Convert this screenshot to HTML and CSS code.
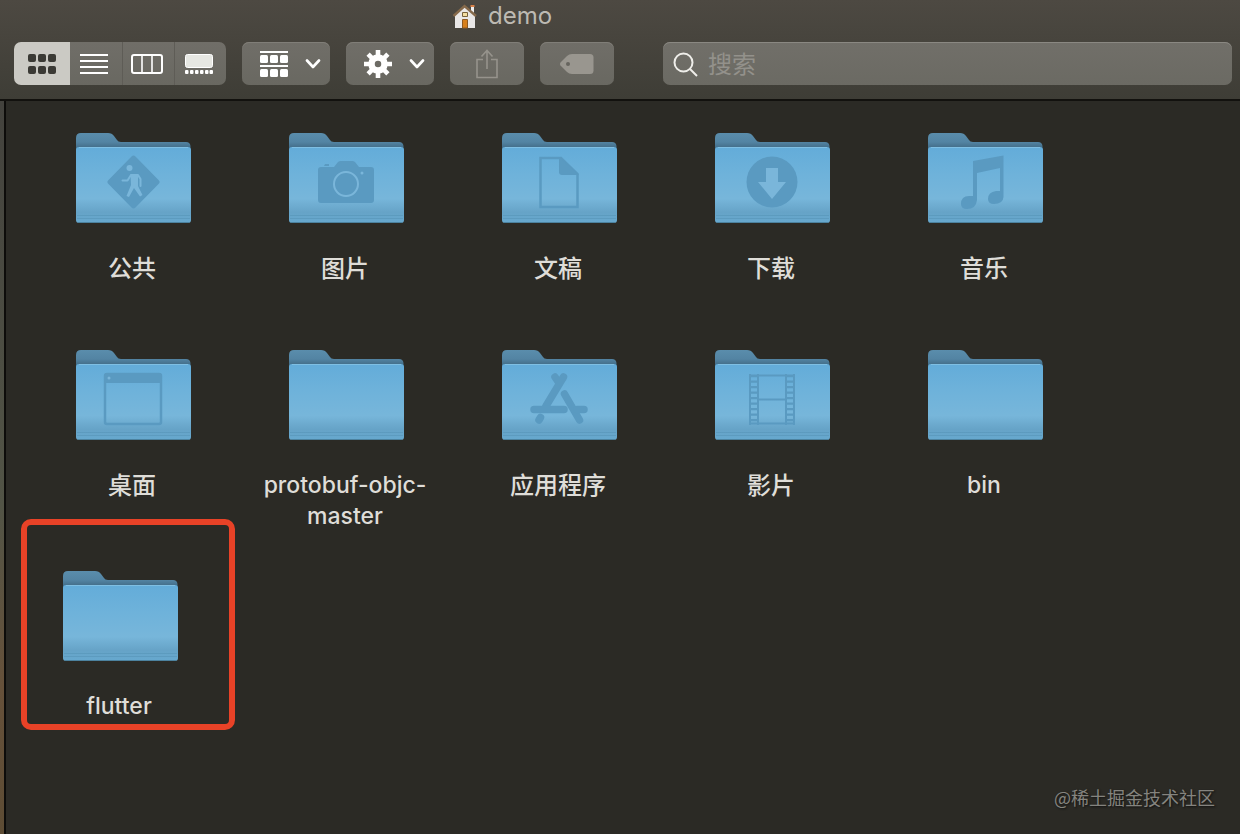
FILE: index.html
```html
<!DOCTYPE html>
<html lang="zh-CN">
<head>
<meta charset="utf-8">
<title>demo</title>
<link rel="stylesheet" href="styles.css">
</head>
<body>
<svg class="defs" aria-hidden="true">
  <defs>
    <linearGradient id="front" x1="0" y1="0" x2="0" y2="1">
      <stop offset="0" stop-color="#63acd9"/>
      <stop offset="0.35" stop-color="#6eb2da"/>
      <stop offset="0.68" stop-color="#77b6da"/>
      <stop offset="0.86" stop-color="#66a3c7"/>
      <stop offset="1" stop-color="#67a9cf"/>
    </linearGradient>
    <linearGradient id="back" x1="0" y1="0" x2="0" y2="1">
      <stop offset="0" stop-color="#5a8dac"/>
      <stop offset="0.3" stop-color="#5384a3"/>
      <stop offset="0.5" stop-color="#426c87"/>
      <stop offset="1" stop-color="#426c87"/>
    </linearGradient>
    <symbol id="folder" viewBox="0 0 115 90">
      <path fill="url(#back)" d="M0 24V5Q0 0 5 0H32Q36 0 38 3L41 7Q42 9 45 9H110Q114 9 114.500 13V30H0Z"/>
      <rect y="14" width="115" height="76" rx="3" fill="url(#front)"/>
      <path d="M3 14.500H112" stroke="#7fbfe3"/>
      <path d="M1 82.500H114M1 85.500H114" stroke="#5795b8" stroke-opacity=".65"/>
      <path d="M2 89.500H113" stroke="#4c829f"/>
    </symbol>
  </defs>
</svg>
<div class="window">
  <header class="toolbar">
    <h1 class="title">
      <svg width="26" height="26" viewBox="0 0 26 26" aria-hidden="true">
        <path fill="#e9e7e6" d="M3 12L13 4L23 12V25H3Z"/>
        <path fill="#eee" d="M19 3h3v8h-3z"/>
        <path fill="#d9824a" d="M18.500 2h4v2h-4z"/>
        <path d="M1.500 13L12.500 3L24 13" fill="none" stroke="#85694a" stroke-width="2.400"/>
        <path fill="#f3dda0" stroke="#77613c" d="M10.500 9.500h5v4h-5z"/>
        <path fill="#d7801d" stroke="#8e5a22" d="M10.500 16.500h5V25h-5z"/>
      </svg>
      <span>demo</span>
    </h1>
    <div class="controls">
      <div class="segments">
        <button class="segment selected" aria-label="图标">
          <svg width="28" height="20" viewBox="0 0 28 20" fill="#3b3a35"><rect width="8" height="8" rx="2"/><rect x="10" width="8" height="8" rx="2"/><rect x="20" width="8" height="8" rx="2"/><rect y="12" width="8" height="8" rx="2"/><rect x="10" y="12" width="8" height="8" rx="2"/><rect x="20" y="12" width="8" height="8" rx="2"/></svg>
        </button>
        <button class="segment" aria-label="列表">
          <svg width="28" height="20" viewBox="0 0 28 20"><path d="M0 1H28M0 7H28M0 13H28M0 19H28" stroke="#fff" stroke-width="2"/></svg>
        </button>
        <button class="segment" aria-label="分栏">
          <svg width="32" height="20" viewBox="0 0 32 20"><path d="M11 1V19M21 1V19" stroke="#fff" stroke-width="1.600"/><rect x="1" y="1" width="30" height="18" rx="2" fill="none" stroke="#fff" stroke-width="2"/></svg>
        </button>
        <button class="segment" aria-label="画廊">
          <svg width="28" height="20" viewBox="0 0 28 20" fill="#fff"><rect x="0.500" y="0.500" width="27" height="13" rx="2" fill="#e6e7e2" stroke="#fff"/><rect y="16" width="3.500" height="4" rx="1"/><rect x="5" y="16" width="3.500" height="4" rx="1"/><rect x="10" y="16" width="3.500" height="4" rx="1"/><rect x="15" y="16" width="3.500" height="4" rx="1"/><rect x="20" y="16" width="3.500" height="4" rx="1"/><rect x="24.500" y="16" width="3.500" height="4" rx="1"/></svg>
        </button>
      </div>
      <button class="tool menu" aria-label="分组">
        <svg width="28" height="26" viewBox="0 0 28 26" fill="#fff"><rect width="28" height="2"/><rect y="4" width="8" height="8" rx="1.500"/><rect x="10" y="4" width="8" height="8" rx="1.500"/><rect x="20" y="4" width="8" height="8" rx="1.500"/><rect y="14" width="28" height="2"/><rect y="18" width="8" height="8" rx="1.500"/><rect x="10" y="18" width="8" height="8" rx="1.500"/><rect x="20" y="18" width="8" height="8" rx="1.500"/></svg>
        <svg width="16" height="10" viewBox="0 0 16 10"><path d="M2 1.500L8 8L14 1.500" fill="none" stroke="#fff" stroke-width="2.600" stroke-linecap="round" stroke-linejoin="round"/></svg>
      </button>
      <button class="tool menu" aria-label="操作">
        <svg width="28" height="28" viewBox="-14 -14 28 28">
          <g stroke="#fff" stroke-width="4.600"><path d="M0 -14V-6M0 14V6M-14 0H-6M14 0H6"/><path d="M0 -14V-6M0 14V6M-14 0H-6M14 0H6" transform="rotate(45)"/></g>
          <circle r="6.500" fill="none" stroke="#fff" stroke-width="6.500"/>
        </svg>
        <svg width="16" height="10" viewBox="0 0 16 10"><path d="M2 1.500L8 8L14 1.500" fill="none" stroke="#fff" stroke-width="2.600" stroke-linecap="round" stroke-linejoin="round"/></svg>
      </button>
      <button class="tool" aria-label="共享">
        <svg width="22" height="30" viewBox="0 0 22 30" fill="none" stroke="#96938c" stroke-width="1.600"><path d="M7 10.500H1V28.500H21V10.500H15M11 20V1.500M5.500 7.500L11 1.500L16.500 7.500"/></svg>
      </button>
      <button class="tool" aria-label="标签">
        <svg width="34" height="20" viewBox="0 0 34 20"><path fill="#99968f" d="M0.500 8.500L7 2Q9 0 12 0H30Q33.500 0 33.500 3.500V16.500Q33.500 20 30 20H12Q9 20 7 18L0.500 11.500Q-.500 10 .500 8.500Z"/><circle cx="8" cy="10" r="2" fill="#66645e"/></svg>
      </button>
      <label class="search">
        <svg width="25" height="25" viewBox="0 0 25 25" fill="none" stroke="#efeeea" stroke-width="2"><circle cx="10.500" cy="10.500" r="9"/><path d="M17 17L24 24"/></svg>
        <input type="search" placeholder="搜索" aria-label="搜索">
      </label>
    </div>
  </header>
  <main class="pane">
    <ul class="files">
      <li class="item">
        <svg class="icon" viewBox="0 0 115 90"><use href="#folder"/>
          <path fill="#5a9ac1" d="M55.500 23.500Q57.500 21.500 59.500 23.500L83 47.500Q84.500 49 83 50.500L59.500 74.500Q57.500 76.500 55.500 74.500L32 50.500Q30.500 49 32 47.500Z"/>
          <circle cx="53.500" cy="35" r="3" fill="#7ab6da"/>
          <path fill="none" stroke="#7ab6da" stroke-linecap="round" stroke-linejoin="round" stroke-width="2" d="M46.500 47.500H51.500L55 42H62L64.500 46V53"/>
          <path fill="#7ab6da" d="M54.500 41H62V53L66.500 62L64 63.500L58 55L53 64L50.500 63L55 52Z"/>
        </svg>
        <span class="name">公共</span>
      </li>
      <li class="item">
        <svg class="icon" viewBox="0 0 115 90"><use href="#folder"/>
          <path fill="#5a9ac1" d="M32 34H45L49 29Q50 28 52 28H63Q65 28 66 29L70 34H82Q85 34 85 37V67Q85 70 82 70H32Q29 70 29 67V37Q29 34 32 34ZM36 31H40V33H35Z"/>
          <circle cx="57" cy="51" r="12" fill="none" stroke="#7ab6da" stroke-width="2"/><circle cx="73" cy="40" r="1.500" fill="#7ab6da"/>
        </svg>
        <span class="name">图片</span>
      </li>
      <li class="item">
        <svg class="icon" viewBox="0 0 115 90"><use href="#folder"/>
          <path fill="none" stroke="#5a9ac1" stroke-width="2.500" d="M38.500 25V74H75.500V41L59 25Z"/><path fill="#5a9ac1" d="M57 24L77 42H60Q57 42 57 39Z"/>
        </svg>
        <span class="name">文稿</span>
      </li>
      <li class="item">
        <svg class="icon" viewBox="0 0 115 90"><use href="#folder"/>
          <circle cx="57" cy="49" r="25.500" fill="#5a9ac1"/><path fill="#7ab6da" d="M51 35H63V49H71L57 66L43 49H51Z"/>
        </svg>
        <span class="name">下载</span>
      </li>
      <li class="item">
        <svg class="icon" viewBox="0 0 115 90"><use href="#folder"/>
          <path fill="#5a9ac1" d="M45 28L75.500 22.500V64Q75 71 66 71Q60 71 60 66Q60 59 68 58H72V35L49 40V67Q48 76 39 76Q33 76 33 71Q33 63 41 63H45Z"/>
        </svg>
        <span class="name">音乐</span>
      </li>
      <li class="item">
        <svg class="icon" viewBox="0 0 115 90"><use href="#folder"/>
          <rect x="29" y="24" width="56" height="50" rx="2" fill="none" stroke="#5a9ac1" stroke-width="2.500"/><path fill="#5a9ac1" d="M29 23H85V33H29Z"/><circle cx="33" cy="28" r="1.500" fill="#7ab6da"/>
        </svg>
        <span class="name">桌面</span>
      </li>
      <li class="item">
        <svg class="icon" viewBox="0 0 115 90"><use href="#folder"/></svg>
        <span class="name latin">protobuf-objc-<wbr>master</span>
      </li>
      <li class="item">
        <svg class="icon" viewBox="0 0 115 90"><use href="#folder"/>
          <g fill="none" stroke="#5a9ac1" stroke-linecap="round" stroke-width="7.500"><path d="M53 27L57 33M61.500 27L44 56M37 70L38.500 67.500M62.500 44L77.500 70"/><path d="M32 59.500H62M75 59.500H82"/></g>
        </svg>
        <span class="name">应用程序</span>
      </li>
      <li class="item">
        <svg class="icon" viewBox="0 0 115 90"><use href="#folder"/>
          <g fill="none" stroke="#5a9ac1" stroke-width="2"><path d="M34 25.500H80M34 73.500H80M43 49.500H71M35 24V75M43 24V75M71 24V75M79 24V75"/><path stroke-width="7" stroke-dasharray="2.200 3.300" d="M39 25V74M75 25V74"/></g>
        </svg>
        <span class="name">影片</span>
      </li>
      <li class="item">
        <svg class="icon" viewBox="0 0 115 90"><use href="#folder"/></svg>
        <span class="name latin">bin</span>
      </li>
      <li class="item marked">
        <svg class="icon" viewBox="0 0 115 90"><use href="#folder"/></svg>
        <span class="name latin">flutter</span>
      </li>
    </ul>
    <p class="watermark">@稀土掘金技术社区</p>
  </main>
</div>
</body>
</html>
```
FILE: styles.css
```css
* {
  box-sizing: border-box;
}

body {
  margin: 0;
  background: #2b2a25;
  color: #dfddd8;
  font-family: Inter, "Noto Sans CJK SC", sans-serif;
}

.defs {
  position: absolute;
  width: 0;
  height: 0;
}

.window {
  display: flex;
  flex-direction: column;
  min-height: 100vh;
}

.toolbar {
  padding: 0 8px 14px 14px;
  border-bottom: 2px solid #12110e;
  background: linear-gradient(#4d4942, #3e3d36);
}

.title {
  display: flex;
  align-items: center;
  justify-content: center;
  gap: 10px;
  margin: 0;
  padding: 0 242px 10px 0;
  color: #bdbab3;
  font-size: 24px;
  font-weight: 400;
  line-height: 32px;
}

.controls {
  display: flex;
  gap: 16px;
}

.controls button {
  display: flex;
  align-items: center;
  justify-content: center;
  height: 43px;
  padding: 0;
  border: 0;
  background: linear-gradient(#706e68, #696861);
}

.segments {
  display: flex;
  overflow: hidden;
  border-radius: 7px;
}

.controls .segment {
  width: 52px;
  padding-right: 4px;
  border-left: 1px solid #5e5c56;
}

.controls .selected {
  width: 56px;
  padding-right: 0;
  border-left: 0;
  background: #cbcac4;
}

.selected + .segment {
  border-left: 0;
}

.controls .tool {
  width: 74px;
  border-radius: 7px;
  box-shadow: inset 0 1px #807e78;
}

.controls .menu {
  gap: 17px;
  width: 88px;
  padding-left: 9px;
}

.search {
  display: flex;
  flex: 1;
  align-items: center;
  gap: 10px;
  height: 43px;
  margin-left: 33px;
  padding: 2px 10px 0;
  border-radius: 7px;
  background: linear-gradient(#716f69, #6b6a63);
  box-shadow: inset 0 1px #8a8882;
}

.search input {
  flex: 1;
  min-width: 0;
  padding: 0;
  border: 0;
  outline: 0;
  background: none;
  color: #fff;
  font: inherit;
  font-size: 24px;
}

.search input::placeholder {
  color: #93918b;
}

.pane {
  display: flex;
  flex: 1;
  flex-direction: column;
  justify-content: space-between;
  border-left: 4px solid #4d4a3b;
  border-image: linear-gradient(#43423d, #525446 55%, #66513a 80%, #5d4c34) 1;
  box-shadow: inset 2px 0 #0d0c0a;
}

.files {
  display: grid;
  grid-template-columns: repeat(auto-fill, 213px);
  grid-auto-rows: 217px;
  margin: 0;
  padding: 32px 100px 0 23px;
  list-style: none;
}

.item {
  display: flex;
  flex-direction: column;
  align-items: center;
  gap: 30px;
}

.icon {
  width: 115px;
  height: 90px;
}

.name {
  max-width: 190px;
  padding-right: 3px;
  font-size: 24px;
  font-weight: 500;
  line-height: 31px;
  text-align: center;
}

.latin {
  font-size: 23px;
}

.marked {
  position: relative;
  margin: 4px 26px 0 0;
}

.marked::after {
  position: absolute;
  inset: -52px -21px 54px -6px;
  border: 6px solid #e84227;
  border-radius: 10px;
  content: "";
}

.watermark {
  margin: 0;
  padding: 0 25px 24px 0;
  color: #85847f;
  font-family: "Noto Sans CJK SC", sans-serif;
  font-size: 18px;
  line-height: 26px;
  text-align: right;
  text-shadow: 1px 1px 2px #111;
}
```
